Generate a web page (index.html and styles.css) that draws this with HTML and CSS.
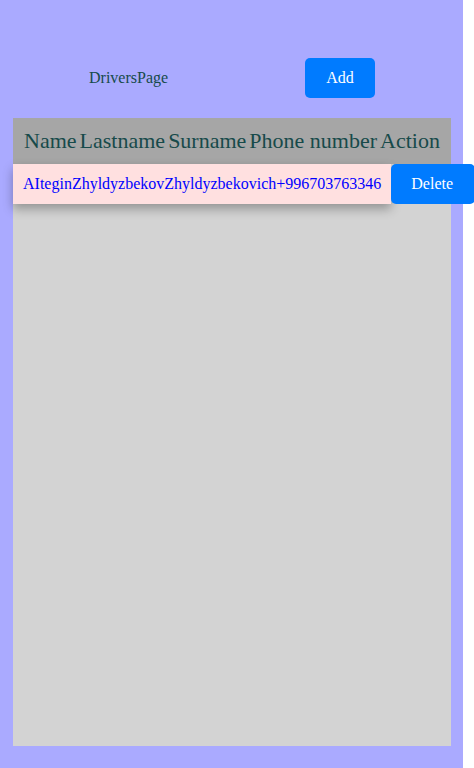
FILE: index.html
```html
<!DOCTYPE html>
<html>
<head>
<meta charset="utf-8">
<link rel="stylesheet" href="styles.css">
</head>
<body>
<div class="page">
  <div class="topbar">
    <span class="title">DriversPage</span>
    <button class="btn add">Add</button>
  </div>
  <div class="panel">
    <div class="thead">
      <span>Name</span><span>Lastname</span><span>Surname</span><span>Phone number</span><span>Action</span>
    </div>
    <div class="row">
      <div class="cells"><span>AItegin</span><span>Zhyldyzbekov</span><span>Zhyldyzbekovich</span><span>+996703763346</span></div>
      <button class="btn del">Delete</button>
    </div>
  </div>
</div>
</body>
</html>
```
FILE: styles.css
```css
html, body { margin: 0; padding: 0; }
body { font-family: "Liberation Serif", "Times New Roman", serif; background: #fff; }
.page {
  width: 463px;
  height: 768px;
  box-sizing: border-box;
  background: #aaaaff;
  padding: 58px 12px 22px 13px;
  display: flex;
  flex-direction: column;
}
.topbar {
  display: flex;
  align-items: center;
  height: 40px;
  padding-left: 76px;
  gap: 137px;
  margin-bottom: 20px;
}
.title { font-size: 16px; color: #174a4a; }
.btn {
  font-family: "Liberation Serif", "Times New Roman", serif;
  font-size: 16px;
  color: #fff;
  background: #007bff;
  border: none;
  border-radius: 5px;
  height: 40px;
  padding: 0 22px 0 20px;
}
.add { width: 70px; padding: 0; }
.panel {
  flex: 1;
  background: #d3d3d3;
  display: flex;
  flex-direction: column;
}
.thead {
  height: 46px;
  background: #a6a6a6;
  display: flex;
  align-items: center;
  justify-content: center;
  font-size: 22px;
  color: #174a4a;
  white-space: nowrap;
  gap: 3px;
}
.row {
  display: flex;
  height: 40px;
}
.cells {
  background: #ffe0e0;
  display: flex;
  align-items: center;
  padding: 0 10px;
  color: #0000ff;
  font-size: 16px;
  box-shadow: 0 5px 10px rgba(0,0,0,0.3);
  white-space: nowrap;
}
.del { flex: none; }
```
